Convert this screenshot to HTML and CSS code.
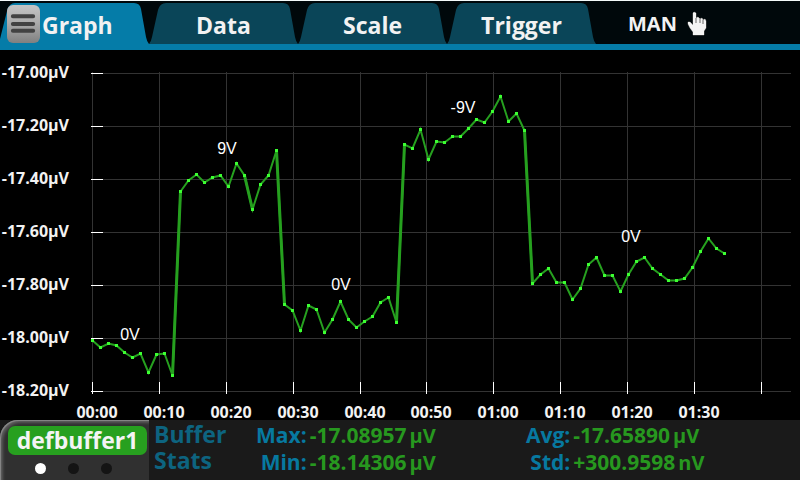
FILE: index.html
```html
<!DOCTYPE html>
<html lang="en">
<head>
<meta charset="utf-8">
<title>Graph</title>
<link rel="stylesheet" href="styles.css">
</head>
<body>
<header class="topbar">
  <nav class="tabs">
    <div class="tab tab-active">
      <svg class="tab-shape" viewBox="0 0 149 41" preserveAspectRatio="none" aria-hidden="true"><path d="M0 41V36L7 8Q9 0 15 0H134Q140 0 141 6L146 34Q147 39 149 41Z"/></svg>
      <button class="menu" type="button" aria-label="Menu">
        <svg viewBox="0 0 34 38" aria-hidden="true"><path d="M6 11H27M6 19H27M6 26H27"/></svg>
      </button>
      <a class="tab-link" href="#graph">Graph</a>
    </div>
    <a class="tab" href="#data">
      <svg class="tab-shape" viewBox="0 0 149 41" preserveAspectRatio="none" aria-hidden="true"><path d="M0 41Q2 39 3 34L9 7Q11 0 17 0H134Q140 0 141 6L146 34Q147 39 149 41Z"/></svg>
      <span class="tab-text">Data</span>
    </a>
    <a class="tab" href="#scale">
      <svg class="tab-shape" viewBox="0 0 149 41" preserveAspectRatio="none" aria-hidden="true"><path d="M0 41Q2 39 3 34L9 7Q11 0 17 0H134Q140 0 141 6L146 34Q147 39 149 41Z"/></svg>
      <span class="tab-text">Scale</span>
    </a>
    <a class="tab" href="#trigger">
      <svg class="tab-shape" viewBox="0 0 149 41" preserveAspectRatio="none" aria-hidden="true"><path d="M0 41Q2 39 3 34L9 7Q11 0 17 0H134Q140 0 141 6L146 34Q147 39 149 41Z"/></svg>
      <span class="tab-text">Trigger</span>
    </a>
  </nav>
  <button class="mode" type="button">MAN
    <svg class="hand" viewBox="0 0 20 26" aria-hidden="true"><path d="M6 2L7 1L9 2V7L11 6L13 8L15 7L16 9L18 8L19 10V17L17 20V24H6V21L3 17L1 13V11L3 11L6 14Z"/><path class="fold" d="M9 7V12M13 8V12M16 9V13"/></svg>
  </button>
</header>

<main class="graph" id="graph">
  <svg class="chart" viewBox="0 50 800 370" role="img" aria-label="Voltage over time">
    <defs>
      <marker id="dot" markerWidth="3" markerHeight="3" refX="1.5" refY="1.5" markerUnits="userSpaceOnUse"><rect class="dot" width="3" height="3"/></marker>
    </defs>
    <g transform="translate(.5 .5)">
      <path class="grid" d="M90 73H790M90 126H790M90 179H790M90 232H790M90 285H790M90 338H790M90 391H790M92 71V393M159 71V393M226 71V393M293 71V393M360 71V393M426 71V393M493 71V393M560 71V393M627 71V393M694 71V393M761 71V393"/>
      <path class="tick" d="M90 73H102M90 126H102M90 179H102M90 232H102M90 285H102M90 338H102M90 391H102M92 381V393M159 381V393M226 381V393M293 381V393M360 381V393M426 381V393M493 381V393M560 381V393M627 381V393M694 381V393M761 381V393"/>
      <path class="edge" d="M172 375L180 191M276 150L284 304M396 322L404 144M524 130L532 283M244 175L252 209"/>
      <polyline class="trace" points="92,340 100,347 108,343 116,345 124,352 132,357 140,353 148,372 156,354 164,353 172,375 180,191 188,180 196,174 204,182 212,177 220,175 228,186 236,163 244,175 252,209 260,184 268,175 276,150 284,304 292,310 300,330 308,305 316,309 324,332 332,319 340,301 348,319 356,327 364,321 372,316 380,302 388,297 396,322 404,144 412,148 420,129 428,159 436,141 444,142 452,136 460,136 468,128 476,119 484,122 492,111 500,96 508,121 516,113 524,130 532,283 540,274 548,268 556,282 564,282 572,299 580,288 588,264 596,257 604,275 612,275 620,291 628,274 636,261 644,257 652,268 660,274 668,280 676,280 684,278 692,267 700,251 708,238 716,248 724,253"/>
    </g>
    <g class="y-labels">
      <text x="69" y="78">-17.00µV</text>
      <text x="69" y="131">-17.20µV</text>
      <text x="69" y="184">-17.40µV</text>
      <text x="69" y="237">-17.60µV</text>
      <text x="69" y="290">-17.80µV</text>
      <text x="69" y="343">-18.00µV</text>
      <text x="69" y="396">-18.20µV</text>
    </g>
    <g class="x-labels">
      <text x="97" y="418">00:00</text>
      <text x="164" y="418">00:10</text>
      <text x="231" y="418">00:20</text>
      <text x="298" y="418">00:30</text>
      <text x="365" y="418">00:40</text>
      <text x="431" y="418">00:50</text>
      <text x="498" y="418">01:00</text>
      <text x="565" y="418">01:10</text>
      <text x="632" y="418">01:20</text>
      <text x="699" y="418">01:30</text>
    </g>
    <g class="notes">
      <text x="130" y="340">0V</text>
      <text x="227" y="154">9V</text>
      <text x="341" y="290">0V</text>
      <text x="463" y="113">-9V</text>
      <text x="631" y="242">0V</text>
    </g>
  </svg>
</main>

<footer class="bottom">
  <section class="buffer">
    <button class="buffer-name" type="button">defbuffer1</button>
    <div class="pager"><i class="page page-on"></i><i class="page"></i><i class="page"></i></div>
  </section>
  <h2 class="stats-title">Buffer Stats</h2>
  <dl class="stats">
    <dt>Max:</dt><dd>-17.08957<span class="unit">µV</span></dd>
    <dt>Min:</dt><dd>-18.14306<span class="unit">µV</span></dd>
  </dl>
  <dl class="stats">
    <dt>Avg:</dt><dd>-17.65890<span class="unit">µV</span></dd>
    <dt>Std:</dt><dd>+300.9598<span class="unit">nV</span></dd>
  </dl>
</footer>
</body>
</html>
```

FILE: styles.css
```css
* { box-sizing: border-box; }

body {
  margin: 0;
  min-height: 100vh;
  display: flex;
  flex-direction: column;
  background: #000;
  color: #f2f2f2;
  font-family: "Open Sans", "Noto Sans", sans-serif;
  font-weight: 700;
}

button {
  margin: 0;
  padding: 0;
  border: 0;
  background: none;
  color: inherit;
  font: inherit;
}

a { color: inherit; text-decoration: none; }

/* Tab bar */
.topbar {
  display: flex;
  height: 50px;
  padding-top: 2px;
  border-top: 1px solid #f4fafa;
  border-bottom: 6px solid #057ca8;
  background: #00080b;
}

.tabs { display: flex; }

.tab {
  position: relative;
  display: flex;
  align-items: center;
  justify-content: center;
  width: 149px;
  height: 41px;
  font-size: 23px;
  line-height: 32px;
}

.tab-active { justify-content: flex-start; padding-left: 7px; gap: 2px; }
.tab-shape { position: absolute; inset: 0; width: 100%; height: 100%; fill: #0a4558; }
.tab-active .tab-shape { fill: #057ca8; }
.tab-text, .tab-link { position: relative; padding-top: 2px; }

.menu {
  position: relative;
  width: 33px;
  height: 38px;
  border-radius: 6px;
  background: linear-gradient(#c4c4c4, #acacac 45%, #808080);
}

.menu svg { display: block; width: 100%; height: 100%; fill: none; stroke: #424242; stroke-width: 4; stroke-linecap: round; }

.mode { display: flex; align-items: center; gap: 10px; margin-left: 32px; font-size: 20px; line-height: 40px; }
.hand { width: 20px; height: 26px; fill: #f4f4f4; stroke: #555; stroke-width: 1; paint-order: stroke; }
.hand .fold { fill: none; stroke: #666; }

/* Graph */
.chart { display: block; width: 100%; overflow: visible; }
.grid, .tick { fill: none; stroke-width: 1; shape-rendering: crispEdges; }
.grid { stroke: #333; }
.tick { stroke: #fff; }
.trace { fill: none; stroke: #26a01f; stroke-width: 2; marker: url(#dot); }
.edge { fill: none; stroke: #26a01f; stroke-width: 3; }
.dot { fill: #3cff32; }
.y-labels, .x-labels { fill: #f2f2f2; font-size: 16px; }
.y-labels { text-anchor: end; }
.x-labels, .notes { text-anchor: middle; }
.notes { fill: #fff; font: 400 16px "Liberation Sans", sans-serif; }

/* Buffer statistics */
.bottom {
  display: flex;
  flex: 1;
  min-height: 60px;
  background: #1a1a1a;
  font-size: 21px;
  line-height: 26px;
}

.buffer {
  width: 149px;
  padding: 6px 0 0 8px;
  border-top-left-radius: 18px;
  background: #303030;
  box-shadow: inset 1px 1px 1px #8a8a8a, inset 3px 3px 3px #5a5a5a;
}

.buffer-name {
  display: block;
  width: 139px;
  height: 29px;
  border-radius: 7px;
  background: #27a01f;
  color: #f4f4f4;
  font-size: 23px;
  line-height: 29px;
}

.pager { display: flex; gap: 22px; padding: 8px 0 0 27px; }
.page { width: 11px; height: 11px; border-radius: 50%; background: #141414; }
.page-on { background: #fff; }

.stats-title { width: 102px; padding-right: 16px; margin: 1px 0 0 5px; color: #0d6480; font-size: 23px; font-weight: 700; line-height: 26px; }

.stats {
  display: grid;
  grid-template-columns: max-content max-content;
  align-content: start;
  column-gap: 3px;
  width: 270px;
  margin: 2px 0 0;
}

.stats dt { color: #0779a0; text-align: right; }
.stats dd { margin: 0; color: #27981f; }
.unit { margin-left: 3px; font-size: 20px; }
```
